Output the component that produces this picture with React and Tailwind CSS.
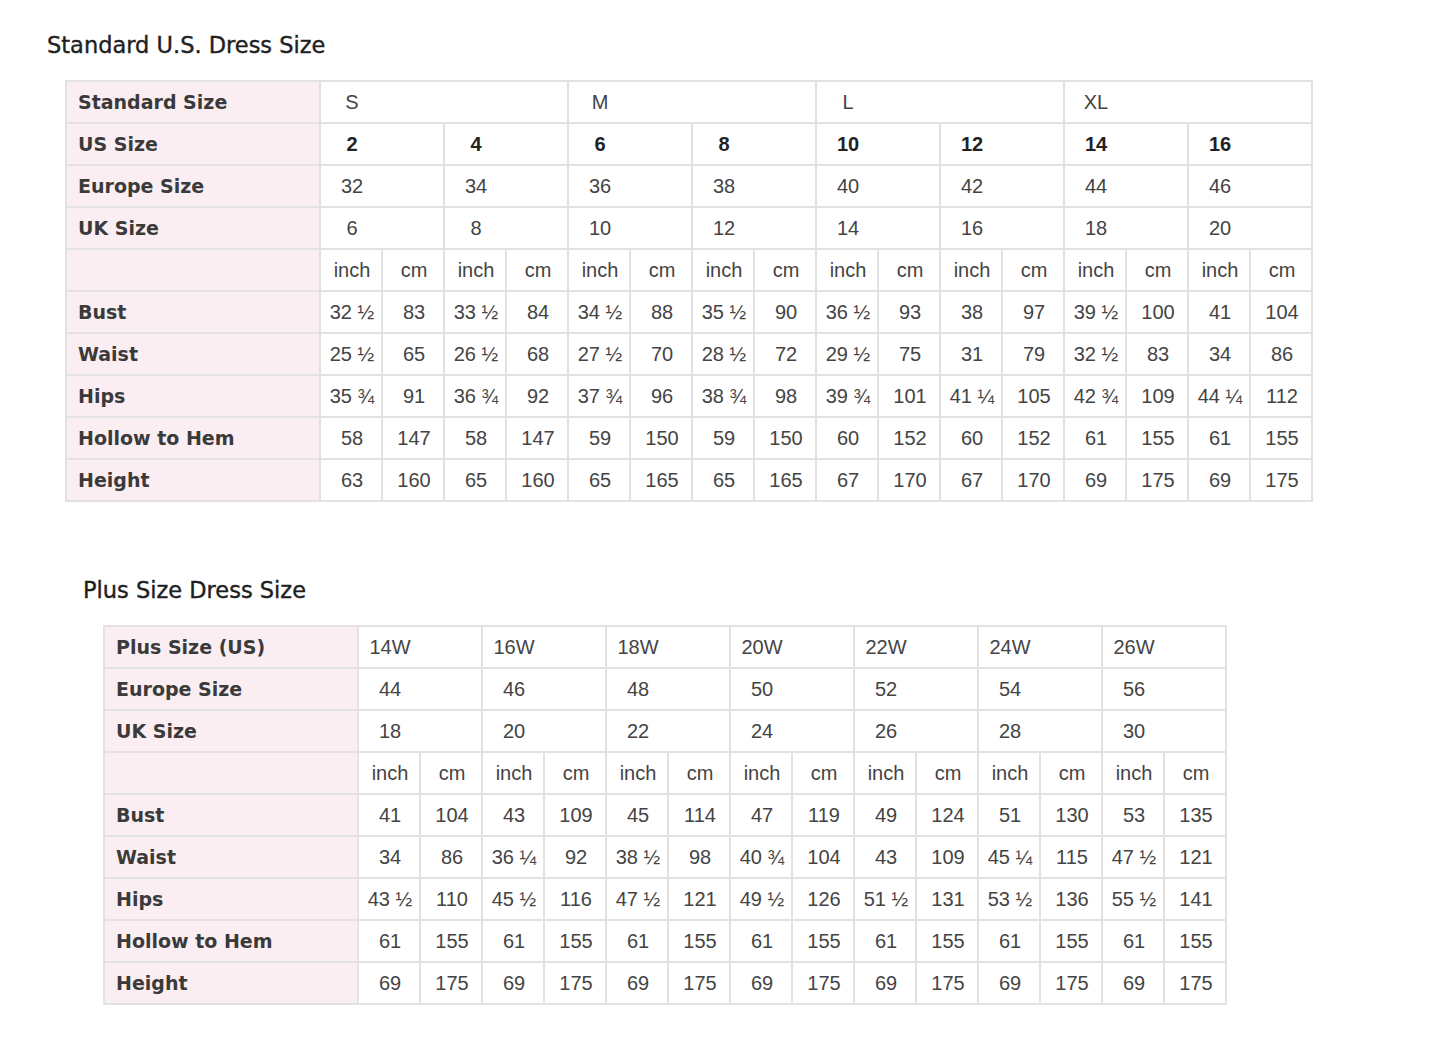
import React from 'react';

const standard = {
  groups: ['S', 'M', 'L', 'XL'],
  us: ['2', '4', '6', '8', '10', '12', '14', '16'],
  eu: ['32', '34', '36', '38', '40', '42', '44', '46'],
  uk: ['6', '8', '10', '12', '14', '16', '18', '20'],
  rows: [
    ['Bust', ['32 ½', '83', '33 ½', '84', '34 ½', '88', '35 ½', '90', '36 ½', '93', '38', '97', '39 ½', '100', '41', '104']],
    ['Waist', ['25 ½', '65', '26 ½', '68', '27 ½', '70', '28 ½', '72', '29 ½', '75', '31', '79', '32 ½', '83', '34', '86']],
    ['Hips', ['35 ¾', '91', '36 ¾', '92', '37 ¾', '96', '38 ¾', '98', '39 ¾', '101', '41 ¼', '105', '42 ¾', '109', '44 ¼', '112']],
    ['Hollow to Hem', ['58', '147', '58', '147', '59', '150', '59', '150', '60', '152', '60', '152', '61', '155', '61', '155']],
    ['Height', ['63', '160', '65', '160', '65', '165', '65', '165', '67', '170', '67', '170', '69', '175', '69', '175']],
  ],
};

const plus = {
  sizes: ['14W', '16W', '18W', '20W', '22W', '24W', '26W'],
  eu: ['44', '46', '48', '50', '52', '54', '56'],
  uk: ['18', '20', '22', '24', '26', '28', '30'],
  rows: [
    ['Bust', ['41', '104', '43', '109', '45', '114', '47', '119', '49', '124', '51', '130', '53', '135']],
    ['Waist', ['34', '86', '36 ¼', '92', '38 ½', '98', '40 ¾', '104', '43', '109', '45 ¼', '115', '47 ½', '121']],
    ['Hips', ['43 ½', '110', '45 ½', '116', '47 ½', '121', '49 ½', '126', '51 ½', '131', '53 ½', '136', '55 ½', '141']],
    ['Hollow to Hem', ['61', '155', '61', '155', '61', '155', '61', '155', '61', '155', '61', '155', '61', '155']],
    ['Height', ['69', '175', '69', '175', '69', '175', '69', '175', '69', '175', '69', '175', '69', '175']],
  ],
};

function Label({ children }) {
  return (
    <td className="h-[42px] border-2 border-[#e2e2e2] bg-[#fbeef2] pl-[11px] text-left font-['DejaVu_Sans',Verdana,sans-serif] text-[19px] font-bold text-[#3a3a3a]">
      {children}
    </td>
  );
}

function Cell({ children, span = 1, bold = false }) {
  return (
    <td colSpan={span} className="h-[42px] border-2 border-[#e2e2e2] p-0 font-['Liberation_Sans',Arial,sans-serif] text-[20px] text-[#444]">
      <div className={bold ? 'w-[62px] text-center font-bold text-[#222]' : 'w-[62px] text-center'}>{children}</div>
    </td>
  );
}

function SizeTable({ cols, header, units, rows, wide }) {
  return (
    <table className={wide ? 'w-[1246px] table-fixed border-collapse border-2 border-[#e2e2e2] bg-white' : 'w-[1122px] table-fixed border-collapse border-2 border-[#e2e2e2] bg-white'}>
      <colgroup>
        <col className="w-[254px]" />
        {Array.from({ length: cols }).map((_, i) => (
          <col key={i} className="w-[62px]" />
        ))}
      </colgroup>
      <tbody>
        {header}
        <tr>
          <Label></Label>
          {Array.from({ length: units }).map((_, i) => (
            <React.Fragment key={i}>
              <Cell>inch</Cell>
              <Cell>cm</Cell>
            </React.Fragment>
          ))}
        </tr>
        {rows.map(([name, vals]) => (
          <tr key={name}>
            <Label>{name}</Label>
            {vals.map((v, i) => (
              <Cell key={i}>{v}</Cell>
            ))}
          </tr>
        ))}
      </tbody>
    </table>
  );
}

export default function App() {
  const stdHeader = (
    <>
      <tr>
        <Label>Standard Size</Label>
        {standard.groups.map((g) => (
          <Cell key={g} span={4}>{g}</Cell>
        ))}
      </tr>
      <tr>
        <Label>US Size</Label>
        {standard.us.map((s) => (
          <Cell key={s} span={2} bold>{s}</Cell>
        ))}
      </tr>
      <tr>
        <Label>Europe Size</Label>
        {standard.eu.map((s) => (
          <Cell key={s} span={2}>{s}</Cell>
        ))}
      </tr>
      <tr>
        <Label>UK Size</Label>
        {standard.uk.map((s) => (
          <Cell key={s} span={2}>{s}</Cell>
        ))}
      </tr>
    </>
  );

  const plusHeader = (
    <>
      <tr>
        <Label>Plus Size (US)</Label>
        {plus.sizes.map((s) => (
          <Cell key={s} span={2}>{s}</Cell>
        ))}
      </tr>
      <tr>
        <Label>Europe Size</Label>
        {plus.eu.map((s) => (
          <Cell key={s} span={2}>{s}</Cell>
        ))}
      </tr>
      <tr>
        <Label>UK Size</Label>
        {plus.uk.map((s) => (
          <Cell key={s} span={2}>{s}</Cell>
        ))}
      </tr>
    </>
  );

  return (
    <div className="min-h-[1055px] bg-white pt-[32px]">
      {/* Standard sizes */}
      <section className="pl-[47px]">
        <h2 className="font-['DejaVu_Sans',Verdana,sans-serif] text-[22.5px] leading-[26px] text-[#1f1f1f] [-webkit-text-stroke:0.4px_#1f1f1f]">
          Standard U.S. Dress Size
        </h2>
        <div className="mt-[22px] pl-[18px]">
          <SizeTable cols={16} units={8} wide header={stdHeader} rows={standard.rows} />
        </div>
      </section>

      {/* Plus sizes */}
      <section className="mt-[75px] pl-[83px]">
        <h2 className="font-['DejaVu_Sans',Verdana,sans-serif] text-[22.5px] leading-[26px] text-[#1f1f1f] [-webkit-text-stroke:0.4px_#1f1f1f]">
          Plus Size Dress Size
        </h2>
        <div className="mt-[22px] pl-[20px]">
          <SizeTable cols={14} units={7} header={plusHeader} rows={plus.rows} />
        </div>
      </section>
    </div>
  );
}
